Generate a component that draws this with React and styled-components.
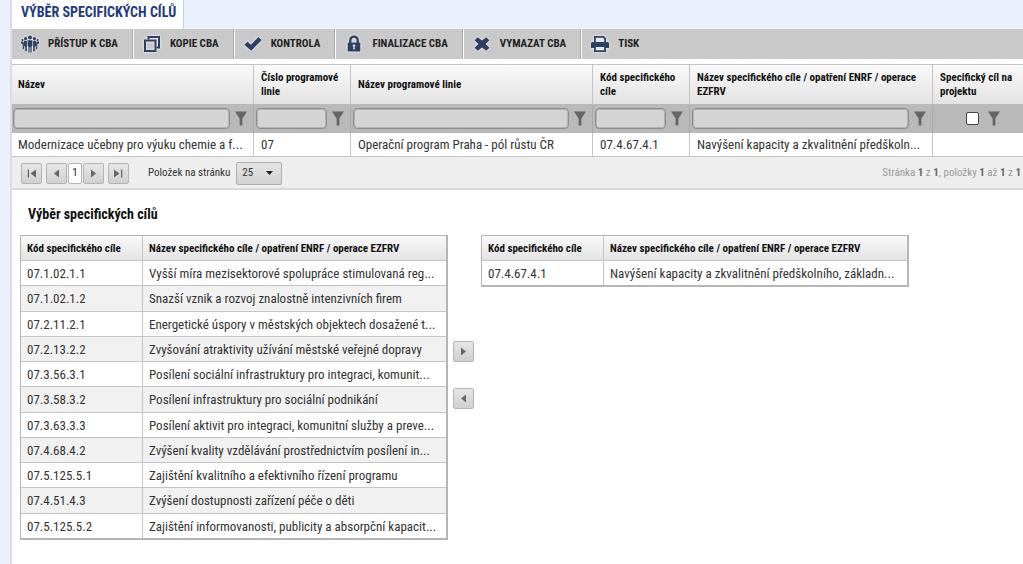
import React, { useState } from "react";
import styled, { createGlobalStyle } from "styled-components";

const line = "#c4c4c4";
const navy = "#2c4063";

const GlobalStyle = createGlobalStyle`
  *, *::before, *::after {
    box-sizing: border-box;
  }

  body {
    margin: 0;
    background-color: #ebf0fd;
    color: #333;
    font-family: "Roboto Condensed", "Liberation Sans Narrow", Roboto, sans-serif;
    font-size: 13px;
    line-height: 18px;
  }

  button, input, select {
    font: inherit;
    color: inherit;
    margin: 0;
  }
`;

const Page = styled.div`
  display: flex;
  flex-direction: column;
  min-height: 100vh;
  margin-left: 10px;
  border-left: 2px solid #d9dce6;
`;

const Tab = styled.h1`
  align-self: flex-start;
  margin: 0;
  padding: 3px 7px 8px 9px;
  border-right: 1px solid #c9cede;
  background-color: white;
  color: #1f3a80;
  font-size: 14px;
  line-height: 18px;
  font-weight: 700;
  text-transform: uppercase;
`;

const Content = styled.main`
  flex: 1;
  background-color: white;
`;

const Toolbar = styled.nav`
  display: flex;
  height: 30px;
  margin-bottom: 5px;
  background-color: #c9c9c9;
`;

const ToolButton = styled.button`
  display: flex;
  align-items: center;
  gap: 9px;
  padding: 0 14px 0 9px;
  border: 0;
  border-right: 1px solid #aaa;
  box-shadow: 1px 0 0 white;
  margin-right: 1px;
  background: none;
  color: #222;
  font-size: 11px;
  font-weight: 700;
  text-transform: uppercase;
  white-space: nowrap;

  &:last-child {
    border-right: 0;
    box-shadow: none;
  }

  svg {
    flex: none;
    filter: drop-shadow(0 0 1px white);
  }
`;

const Table = styled.table`
  width: 100%;
  table-layout: fixed;
  border-collapse: separate;
  border-spacing: 0;
`;

const HeadCell = styled.th`
  padding: 1px 0 0 7px;
  border-right: 1px solid ${line};
  border-bottom: 1px solid ${line};
  background: linear-gradient(#f9f9f9, #e3e3e3);
  color: #111;
  font-size: 11px;
  line-height: 14px;
  font-weight: 700;
  text-align: left;
`;

const Cell = styled.td`
  overflow: hidden;
  padding: 1px 0 0 7px;
  border-right: 1px solid ${line};
  border-bottom: 1px solid ${line};
  text-overflow: ellipsis;
  white-space: nowrap;
`;

const Grid = styled(Table)`
  border-top: 1px solid ${line};

  ${HeadCell} {
    height: 40px;
    border-bottom-color: #b9b9b9;
  }

  tr > :first-child {
    padding-left: 6px;
  }

  tr > :last-child {
    border-right: 0;
  }

  ${Cell} {
    height: 24px;
  }
`;

const FilterCell = styled.td`
  height: 28px;
  padding: 0 6px 1px 2px;
  border-right: 1px solid #aaa;
  background-color: #b9b9b9;

  tr > &:first-child {
    padding-left: 1px;
  }
`;

const Filter = styled.div`
  display: flex;
  align-items: center;
  justify-content: ${props => (props.$center ? "center" : "stretch")};
  gap: ${props => (props.$center ? 9 : 5)}px;
  padding-left: ${props => (props.$center ? 14 : 0)}px;

  svg {
    flex: none;
  }
`;

const FilterInput = styled.input`
  flex: 1;
  min-width: 0;
  height: 21px;
  padding: 0 5px;
  border: 1px solid #8c8c8c;
  border-radius: 4px;
  box-shadow: inset 0 0 0 1px #b4b4b4;
  background-color: #d4d4d4;
`;

const FilterCheck = styled.input`
  appearance: none;
  width: 13px;
  height: 13px;
  border: 1px solid #444;
  border-radius: 2px;
  background-color: white;

  &:checked {
    background-color: ${navy};
  }
`;

const Pager = styled.div`
  display: flex;
  align-items: center;
  height: 33px;
  padding: 1px 2px 0 9px;
  border-bottom: 2px solid #d9d9d9;
  background-color: #eee;
  font-size: 11px;
`;

const PagerButtons = styled.div`
  display: flex;
  align-items: center;
  gap: 4px;
  margin-right: 19px;
`;

const PageGroup = styled.div`
  display: flex;
  gap: 1px;
`;

const SmallButton = styled.button`
  display: grid;
  place-items: center;
  width: 21px;
  height: 21px;
  padding: 0;
  border: 1px solid #b4b4b4;
  border-radius: 2px;
  background: linear-gradient(#e6e6e6, #d0d0d0);
`;

const PageButton = styled(SmallButton)`
  width: 14px;
  background: white;
  color: #222;
`;

const SizeLabel = styled.label`
  display: flex;
  align-items: center;
  gap: 6px;
`;

const SelectBox = styled.span`
  display: grid;
  align-items: center;

  > * {
    grid-area: 1 / 1;
  }

  svg {
    justify-self: end;
    margin-right: 9px;
    pointer-events: none;
  }
`;

const Select = styled.select`
  appearance: none;
  width: 46px;
  height: 23px;
  padding: 0 5px;
  border: 1px solid #adadad;
  border-radius: 2px;
  background: linear-gradient(#e3e3e3, #d3d3d3);
`;

const Summary = styled.span`
  margin-left: auto;
  color: #999;

  b {
    color: #666;
  }
`;

const Picker = styled.section`
  padding: 15px 8px;
`;

const PickerTitle = styled.h2`
  margin: 0 0 12px;
  padding-left: 8px;
  color: #111;
  font-size: 14px;
  line-height: 18px;
`;

const PickerBody = styled.div`
  display: flex;
  align-items: flex-start;
`;

const List = styled(Table)`
  flex: 0 1 428px;
  border: 1px solid #b5b5b5;
  border-right-width: 2px;
  border-bottom-width: 2px;

  tr > :last-child {
    border-right: 0;
  }

  ${HeadCell}, ${Cell} {
    height: 25px;
    padding-left: 6px;
  }

  tbody tr:nth-child(even) {
    background-color: #f1f1f1;
  }

  tbody tr:nth-child(4n + 2) ${Cell} {
    height: 26px;
  }

  tbody tr:last-child ${Cell} {
    height: 24px;
    border-bottom: 0;
  }
`;

const Transfer = styled.div`
  display: flex;
  flex-direction: column;
  gap: 26px;
  padding: 106px 7px 0 5px;
`;

const PeopleIcon = () => (
  <svg width="18" height="18" viewBox="0 0 18 18" fill={navy}>
    <circle cx="9" cy="2.6" r="2" />
    <circle cx="4.6" cy="3.6" r="1.6" />
    <circle cx="13.4" cy="3.6" r="1.6" />
    <circle cx="1.5" cy="5" r="1.1" />
    <circle cx="16.5" cy="5" r="1.1" />
    <path d="M6.6 5.2h4.8v6h-.8v6.3H9.4v-5.3h-.8v5.3H7.4v-6.3h-.8z" />
    <path d="M3 5.8h2.9v10.4H5v-4h-.3v4H3.8v-5H3z" />
    <path d="M15 5.8h-2.9v10.4h.9v-4h.3v4h.9v-5h.8z" />
    <path d="M0 6.6h2.3l.6 1.6v6H1.7v-4.6L0 8.2z" />
    <path d="M18 6.6h-2.3l-.6 1.6v6h1.2v-4.6l1.7-1.4z" />
  </svg>
);

const CopyIcon = () => (
  <svg width="18" height="18" viewBox="0 0 18 18" fill="none" stroke={navy} strokeWidth="2">
    <path d="M5.5 4.5v-2.5h10.5v10.5h-2.5" />
    <path d="M2 5.5h10.5v10.5h-10.5z" />
  </svg>
);

const CheckIcon = () => (
  <svg width="18" height="18" viewBox="0 0 18 18" fill={navy}>
    <path d="M.3 9.8 3.6 6.7l3.3 3L14.4 2l3.3 3L7.2 15.8z" />
  </svg>
);

const LockIcon = () => (
  <svg width="18" height="18" viewBox="0 0 18 18">
    <path d="M5.3 8V5.3a3.7 3.7 0 0 1 7.4 0V8" fill="none" stroke={navy} strokeWidth="2.4" />
    <rect x="2.7" y="7.5" width="12.6" height="9" rx="1" fill={navy} />
    <path d="M9 9.4a1.2 1.2 0 0 1 .6 2.3l.3 2.6H8.1l.3-2.6A1.2 1.2 0 0 1 9 9.4z" fill="#dde2ea" />
  </svg>
);

const CrossIcon = () => (
  <svg width="18" height="18" viewBox="0 0 18 18" fill={navy}>
    <path d="M1.6 5.2 4.8 2.2 9 5.6l4.2-3.4 3.2 3L12.6 9l3.8 3.8-3.2 3L9 12.4l-4.2 3.4-3.2-3L5.4 9z" />
  </svg>
);

const PrintIcon = () => (
  <svg width="18" height="18" viewBox="0 0 18 18">
    <path d="M3.9 7V1.9h8.4l1.8 1.8V7" fill="#e4e8ef" stroke={navy} strokeWidth="1.8" />
    <path d="M0 8.5A1.5 1.5 0 0 1 1.5 7h15A1.5 1.5 0 0 1 18 8.5V13H0z" fill={navy} />
    <path d="M3.9 11h10.2v5.1H3.9z" fill="#e4e8ef" stroke={navy} strokeWidth="1.8" />
  </svg>
);

const FunnelIcon = () => (
  <svg width="12" height="15" viewBox="0 0 12 15" fill="#666">
    <path d="M0 .5h12L7.4 7.5v7H4.6v-7z" />
  </svg>
);

const Arrow = ({ left, bar }) => (
  <svg width="9" height="9" viewBox="0 0 9 9" fill="#666">
    <g transform={left ? "matrix(-1 0 0 1 9 0)" : undefined}>
      <path d={bar ? "M0 .5 5.5 4.5 0 8.5z" : "M2 .5 7 4.5 2 8.5z"} />
      {bar && <path d="M7 .5h1.3v8H7z" />}
    </g>
  </svg>
);

const tools = [
  ["Přístup k CBA", PeopleIcon],
  ["Kopie CBA", CopyIcon],
  ["Kontrola", CheckIcon],
  ["Finalizace CBA", LockIcon],
  ["Vymazat CBA", CrossIcon],
  ["Tisk", PrintIcon]
];

const columns = [
  ["Název", 242],
  ["Číslo programové linie", 97],
  ["Název programové linie", 242],
  ["Kód specifického cíle", 97],
  ["Název specifického cíle / opatření ENRF / operace EZFRV", 243],
  ["Specifický cíl na projektu", 90]
];

const record = [
  "Modernizace učebny pro výuku chemie a f...",
  "07",
  "Operační program Praha - pól růstu ČR",
  "07.4.67.4.1",
  "Navýšení kapacity a zkvalitnění předškoln...",
  ""
];

const available = [
  ["07.1.02.1.1", "Vyšší míra mezisektorové spolupráce stimulovaná reg..."],
  ["07.1.02.1.2", "Snazší vznik a rozvoj znalostně intenzivních firem"],
  ["07.2.11.2.1", "Energetické úspory v městských objektech dosažené t..."],
  ["07.2.13.2.2", "Zvyšování atraktivity užívání městské veřejné dopravy"],
  ["07.3.56.3.1", "Posílení sociální infrastruktury pro integraci, komunit..."],
  ["07.3.58.3.2", "Posílení infrastruktury pro sociální podnikání"],
  ["07.3.63.3.3", "Posílení aktivit pro integraci, komunitní služby a preve..."],
  ["07.4.68.4.2", "Zvýšení kvality vzdělávání prostřednictvím posílení in..."],
  ["07.5.125.5.1", "Zajištění kvalitního a efektivního řízení programu"],
  ["07.4.51.4.3", "Zvýšení dostupnosti zařízení péče o děti"],
  ["07.5.125.5.2", "Zajištění informovanosti, publicity a absorpční kapacit..."]
];

const selected = [
  ["07.4.67.4.1", "Navýšení kapacity a zkvalitnění předškolního, základn..."]
];

const GoalList = ({ rows, label }) => (
  <List aria-label={label}>
    <colgroup>
      <col width="122" />
      <col />
    </colgroup>
    <thead>
      <tr>
        <HeadCell>Kód specifického cíle</HeadCell>
        <HeadCell>Název specifického cíle / opatření ENRF / operace EZFRV</HeadCell>
      </tr>
    </thead>
    <tbody>
      {rows.map(([code, name]) => (
        <tr key={code}>
          <Cell>{code}</Cell>
          <Cell>{name}</Cell>
        </tr>
      ))}
    </tbody>
  </List>
);

const App = () => {
  const [size, setSize] = useState("25");

  return (
    <Page>
      <GlobalStyle />
      <Tab>Výběr specifických cílů</Tab>
      <Content>
        <Toolbar>
          {tools.map(([label, Icon]) => (
            <ToolButton key={label} type="button">
              <Icon />
              {label}
            </ToolButton>
          ))}
        </Toolbar>

        <Grid>
          <colgroup>
            {columns.map(([label, width]) => (
              <col key={label} width={width} />
            ))}
          </colgroup>
          <thead>
            <tr>
              {columns.map(([label]) => (
                <HeadCell key={label}>{label}</HeadCell>
              ))}
            </tr>
            <tr>
              {columns.map(([label], i) => {
                const last = i === columns.length - 1;
                return (
                  <FilterCell key={label}>
                    <Filter $center={last}>
                      {last ? (
                        <FilterCheck type="checkbox" aria-label={label} />
                      ) : (
                        <FilterInput type="text" aria-label={label} />
                      )}
                      <FunnelIcon />
                    </Filter>
                  </FilterCell>
                );
              })}
            </tr>
          </thead>
          <tbody>
            <tr>
              {record.map((value, i) => (
                <Cell key={columns[i][0]}>{value}</Cell>
              ))}
            </tr>
          </tbody>
        </Grid>

        <Pager>
          <PagerButtons>
            <SmallButton type="button" aria-label="První stránka">
              <Arrow left bar />
            </SmallButton>
            <PageGroup>
              <SmallButton type="button" aria-label="Předchozí stránka">
                <Arrow left />
              </SmallButton>
              <PageButton type="button">1</PageButton>
              <SmallButton type="button" aria-label="Další stránka">
                <Arrow />
              </SmallButton>
            </PageGroup>
            <SmallButton type="button" aria-label="Poslední stránka">
              <Arrow bar />
            </SmallButton>
          </PagerButtons>
          <SizeLabel>
            Položek na stránku
            <SelectBox>
              <Select value={size} onChange={e => setSize(e.target.value)}>
                <option>25</option>
                <option>50</option>
              </Select>
              <svg width="7" height="4" viewBox="0 0 7 4" fill="#222">
                <path d="M0 0h7L3.5 4z" />
              </svg>
            </SelectBox>
          </SizeLabel>
          <Summary>
            Stránka <b>1</b> z <b>1</b>, položky <b>1</b> až <b>1</b> z <b>1</b>
          </Summary>
        </Pager>

        <Picker>
          <PickerTitle>Výběr specifických cílů</PickerTitle>
          <PickerBody>
            <GoalList rows={available} label="Dostupné cíle" />
            <Transfer>
              <SmallButton type="button" aria-label="Přidat">
                <Arrow />
              </SmallButton>
              <SmallButton type="button" aria-label="Odebrat">
                <Arrow left />
              </SmallButton>
            </Transfer>
            <GoalList rows={selected} label="Vybrané cíle" />
          </PickerBody>
        </Picker>
      </Content>
    </Page>
  );
};

export default App;
